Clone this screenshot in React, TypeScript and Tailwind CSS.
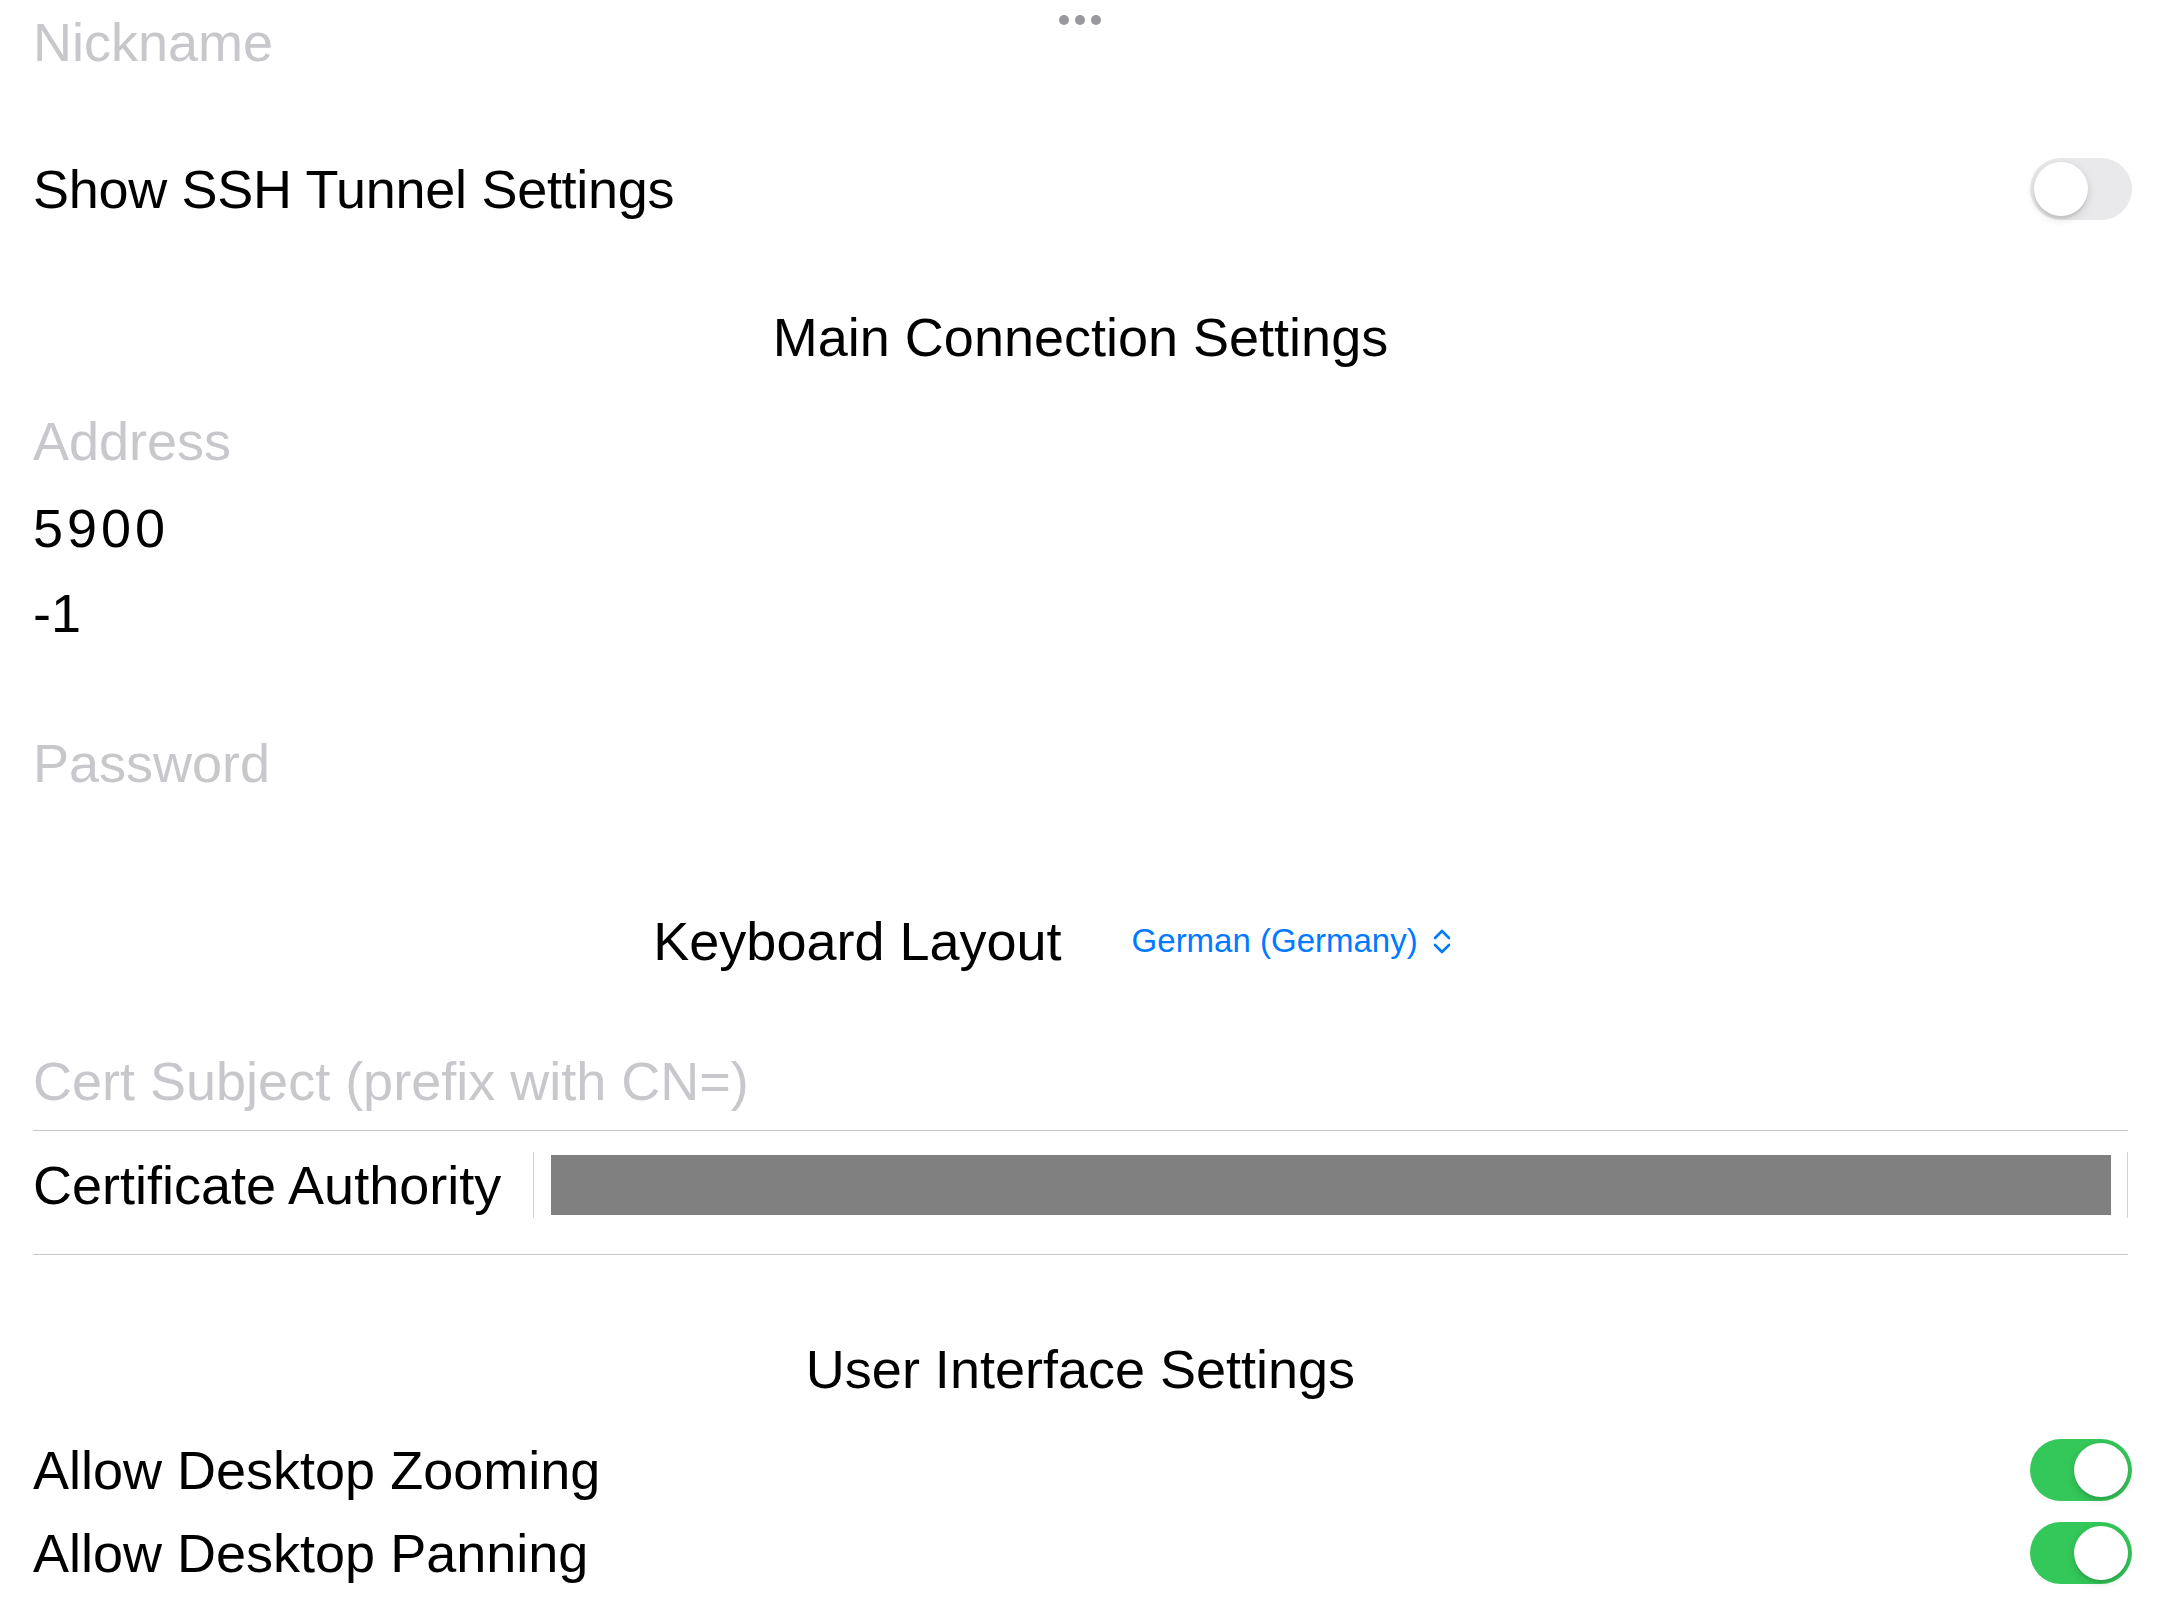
import React from "react";

const font = { fontFamily: '"Liberation Sans", Arial, sans-serif' };

function Toggle({ on }: { on: boolean }) {
  return (
    <div
      className={
        "relative w-[102px] h-[62px] rounded-full shrink-0 -mr-[4px] " +
        (on ? "bg-[#34c759]" : "bg-[#e9e9eb]")
      }
    >
      <div
        className={
          "absolute top-[4px] w-[54px] h-[54px] rounded-full bg-white shadow-[0_3px_8px_rgba(0,0,0,0.15),0_3px_1px_rgba(0,0,0,0.06)] " +
          (on ? "left-[44px]" : "left-[4px]")
        }
      />
    </div>
  );
}

export default function App() {
  return (
    <div
      className="relative w-[2160px] h-[1620px] bg-white overflow-hidden text-black"
      style={font}
    >
      {/* grabber dots */}
      <div className="absolute top-[15px] left-[1059px] flex gap-[6px]">
        <div className="w-[10px] h-[10px] rounded-full bg-[#9a9a9e]" />
        <div className="w-[10px] h-[10px] rounded-full bg-[#9a9a9e]" />
        <div className="w-[10px] h-[10px] rounded-full bg-[#9a9a9e]" />
      </div>

      <div className="flex flex-col pl-[33px] pr-[32px] pt-[10px] text-[54px] leading-[64px]">
        <div className="text-[#c7c7cc]">Nickname</div>

        <div className="mt-[82px] h-[66px] flex items-center justify-between">
          <span className="tracking-[-0.3px]">Show SSH Tunnel Settings</span>
          <Toggle on={false} />
        </div>

        <div className="mt-[83px] text-center">Main Connection Settings</div>

        <div className="mt-[40px] text-[#c7c7cc]">Address</div>
        <div className="mt-[23px] tracking-[4px]">5900</div>
        <div className="mt-[21px]">-1</div>
        <div className="mt-[86px] text-[#c7c7cc]">Password</div>

        <div className="mt-[114px] flex items-center justify-center">
          <span>Keyboard Layout</span>
          <div className="ml-[70px] mr-[57px] flex items-center gap-[15px] text-[33px] leading-[40px] text-[#007aff]">
            <span>German (Germany)</span>
            <svg
              width="18"
              height="25"
              viewBox="0 0 18 25"
              fill="none"
              stroke="#007aff"
              strokeWidth="2.6"
              strokeLinecap="round"
              strokeLinejoin="round"
            >
              <path d="M2 9 L9 2 L16 9" />
              <path d="M2 16 L9 23 L16 16" />
            </svg>
          </div>
        </div>

        <div className="mt-[76px] text-[#c7c7cc]">Cert Subject (prefix with CN=)</div>
        <div className="mt-[17px] h-px bg-[#c8c8cc]" />

        <div className="pt-[21px] pb-[36px] flex items-center">
          <span className="w-[500px] shrink-0">Certificate Authority</span>
          <div className="w-px h-[66px] bg-[#d1d1d6]" />
          <div className="ml-[17px] flex-1 h-[60px] bg-[#808080]" />
          <div className="ml-[16px] w-px h-[66px] bg-[#d1d1d6]" />
        </div>
        <div className="h-px bg-[#c8c8cc]" />

        <div className="mt-[82px] text-center">User Interface Settings</div>

        <div className="mt-[38px] h-[62px] flex items-center justify-between">
          <span>Allow Desktop Zooming</span>
          <Toggle on={true} />
        </div>
        <div className="mt-[21px] h-[62px] flex items-center justify-between">
          <span>Allow Desktop Panning</span>
          <Toggle on={true} />
        </div>
      </div>
    </div>
  );
}
